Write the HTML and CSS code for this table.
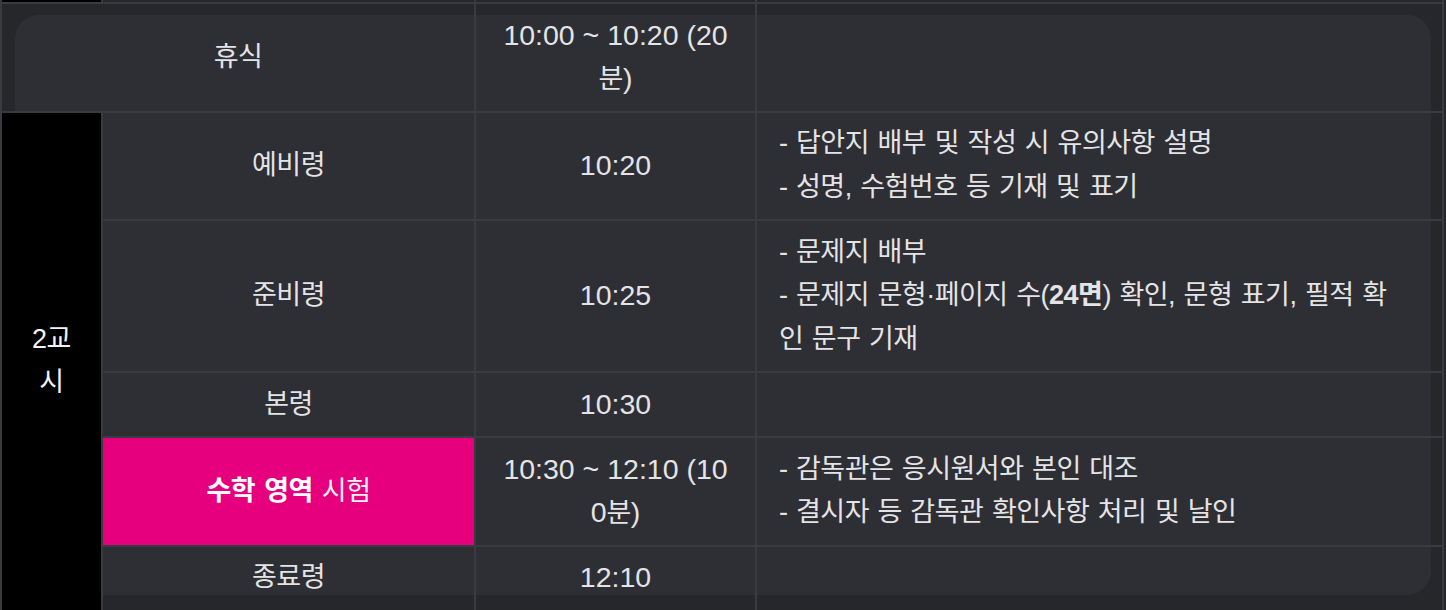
FILE: index.html
```html
<!DOCTYPE html>
<html lang="ko">
<head>
<meta charset="utf-8">
<title>2교시 시간표</title>
<link rel="stylesheet" href="styles.css">
</head>
<body>
<div class="page">
  <div class="panel">
    <table class="sched">
      <colgroup>
        <col class="c-period">
        <col class="c-label">
        <col class="c-time">
        <col class="c-desc">
      </colgroup>
      <tbody>
        <tr class="prev">
          <td class="period"></td>
          <td></td>
          <td></td>
          <td></td>
        </tr>
        <tr>
          <td class="label" colspan="2">휴식</td>
          <td class="time">10:00 ~ 10:20 (20<span class="ko">분</span>)</td>
          <td class="desc"></td>
        </tr>
        <tr>
          <td class="period" rowspan="5">2교시</td>
          <td class="label">예비령</td>
          <td class="time">10:20</td>
          <td class="desc">- 답안지 배부 및 작성 시 유의사항 설명<br>- 성명, 수험번호 등 기재 및 표기</td>
        </tr>
        <tr>
          <td class="label">준비령</td>
          <td class="time">10:25</td>
          <td class="desc">- 문제지 배부<br>- 문제지 문형·페이지 수(<b>24면</b>) 확인, 문형 표기, 필적 확인 문구 기재</td>
        </tr>
        <tr>
          <td class="label">본령</td>
          <td class="time">10:30</td>
          <td class="desc"></td>
        </tr>
        <tr>
          <td class="label exam"><b>수학 영역</b> 시험</td>
          <td class="time">10:30 ~ 12:10 (100<span class="ko">분</span>)</td>
          <td class="desc">- 감독관은 응시원서와 본인 대조<br>- 결시자 등 감독관 확인사항 처리 및 날인</td>
        </tr>
        <tr>
          <td class="label">종료령</td>
          <td class="time">12:10</td>
          <td class="desc"></td>
        </tr>
      </tbody>
    </table>
  </div>
</div>
</body>
</html>
```

FILE: styles.css
```css
html, body {
  margin: 0;
  padding: 0;
}

body {
  background: #26272b;
  font-family: "Liberation Sans", "Noto Sans CJK KR", sans-serif;
  color: #e4e4e6;
}

.page {
  box-sizing: border-box;
  width: 1446px;
  height: 610px;
  padding: 15px;
  overflow: hidden;
  background: #26272b;
}

.panel {
  display: flow-root;
  width: 1416px;
  height: 580px;
  border-radius: 24px;
  background: #2e2f34;
}

.sched {
  width: 1444px;
  margin: -55px 0 0 -15px;
  border-collapse: collapse;
  table-layout: fixed;
  font-size: 27px;
  letter-spacing: -0.5px;
  line-height: 43.5px;
  word-break: break-all;
}

.c-period { width: 101px; }
.c-label { width: 373px; }
.c-time { width: 281px; }
.c-desc { width: 687px; }

.sched td {
  border: 2px solid #3a3b40;
  padding: 9.75px 22px;
  vertical-align: middle;
}

.sched .prev td {
  height: 40px;
  padding: 0;
}

.ko {
  font-family: "Noto Sans CJK KR", sans-serif;
  font-size: 27px;
  letter-spacing: -0.5px;
  line-height: 1;
}

.period {
  background: #000000;
  color: #f2f2f2;
  text-align: center;
}

.sched td.period {
  padding: 0 24px;
}

.label {
  text-align: center;
}

.exam {
  background: #e6007e;
  color: #f2f2f2;
  word-spacing: 2px;
}

.exam b {
  color: #ffffff;
  font-weight: 700;
}

.sched td.time {
  text-align: center;
  font-size: 28.5px;
  letter-spacing: 0;
  padding-left: 25px;
  padding-right: 25px;
}

.sched td.desc {
  text-align: left;
  word-spacing: 1.5px;
  padding-left: 22px;
  padding-right: 45px;
}

.desc b {
  font-weight: 700;
}
```
